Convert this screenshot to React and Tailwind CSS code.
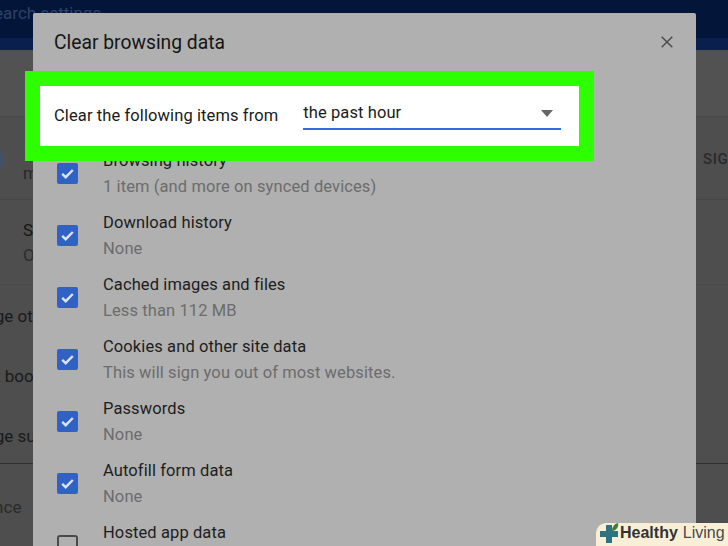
const rows = [
  ["Browsing history", "1 item (and more on synced devices)", true],
  ["Download history", "None", true],
  ["Cached images and files", "Less than 112 MB", true],
  ["Cookies and other site data", "This will sign you out of most websites.", true],
  ["Passwords", "None", true],
  ["Autofill form data", "None", true],
  ["Hosted app data", "", false],
];

function Box({ on }) {
  if (!on) return <div className="w-[21px] h-[21px] mt-[14px] rounded-[3px] border-2 border-[#4a4a4a] shrink-0" />;
  return (
    <div className="w-[21px] h-[21px] mt-[14px] rounded-[2px] bg-[#2f62c4] shrink-0 flex items-center justify-center">
      <svg width="15" height="15" viewBox="0 0 15 15" fill="none">
        <path d="M2.2 7.8l3.5 3.4L12.8 4" stroke="#dde3ee" strokeWidth="2.4" />
      </svg>
    </div>
  );
}

export default function App() {
  return (
    <div className="relative w-[728px] h-[546px] overflow-hidden bg-[#4e4e4e] font-['Roboto',sans-serif]">
      <div className="h-[38px] bg-[#04153a] text-[#2f4168] text-[17px] pt-[1px] -ml-[16px] pl-0 whitespace-nowrap">Search settings</div>
      <div className="h-[12px] bg-[#09204f]" />
      <div className="flex flex-col text-[#1c1c1c] text-[17px] leading-[20px] whitespace-nowrap">
        <div className="h-[67px] bg-[#525252] border-b border-[#484848]" />
        <div className="h-[83px] border-b border-[#484848] flex">
          <div className="w-[28px] h-[28px] -ml-[25px] mt-[29px] rounded-full bg-[#3d5270]" />
          <div className="ml-[20px] mt-[46px] text-[#282828]">m</div>
        </div>
        <div className="h-[85px] border-b border-[#4a4a4a] pt-[20px] pl-[23px]">
          <div className="text-[#161616]">S</div>
          <div className="mt-[5px] text-[#2c2c2c]">O</div>
        </div>
        <div className="h-[60px] pt-[21px] -ml-[48px] text-[#1a1a1a]">Manage other people</div>
        <div className="h-[60px] pt-[21px] -ml-[50px] text-[#1a1a1a]">Import bookmarks</div>
        <div className="h-[59px] pt-[21px] -ml-[48px] text-[#1a1a1a] border-b border-[#303030]">Manage supervised</div>
        <div className="h-[80px] pt-[33px] -ml-[69px] text-[#2a2a2a]">Appearance</div>
      </div>

      {/* Clear browsing data dialog */}
      <div className="absolute left-[33px] top-[13px] w-[663px] h-[560px] bg-[#b0b0b0] rounded-t-[2px] pl-[21px]">
        <div className="pt-[18px] text-[19.3px] leading-[24px] text-[#151515]">Clear browsing data</div>
        <svg className="absolute left-[628px] top-[23px]" width="12" height="12" viewBox="0 0 12 12" fill="none">
          <path d="M0.7 0.7l10.6 10.6M11.3 0.7L0.7 11.3" stroke="#4d4d4d" strokeWidth="1.5" />
        </svg>
        <div className="mt-[94px] flex flex-col">
          {rows.map(([title, sub, on]) => (
            <div key={title} className="h-[62px] flex items-start gap-[25px] pl-[3px]">
              <Box on={on} />
              <div className="flex flex-col">
                <div className="text-[16.5px] leading-[24px] text-[#1d1d1d] tracking-[0.1px]">{title}</div>
                <div className="text-[16.5px] leading-[24px] mt-[2px] text-[#6c6c6c] tracking-[0.1px]">{sub}</div>
              </div>
            </div>
          ))}
        </div>
      </div>

      {/* Green highlight */}
      <div className="absolute left-[25px] top-[71px] w-[569px] h-[90px] border-[15px] border-[#2eff00] bg-white flex items-center pl-[14px]">
        <span className="text-[16.5px] text-[#1a1a1a] tracking-[0.1px] whitespace-nowrap">Clear the following items from</span>
        <div className="ml-[25px] w-[258px] h-[31px] border-b-2 border-[#2f6fdd] flex items-center justify-between pr-[8px] -mt-[4px]">
          <span className="text-[16.5px] text-[#1a1a1a] tracking-[0.1px]">the past hour</span>
          <span className="w-0 h-0 border-x-[6.5px] border-x-transparent border-t-[7px] border-t-[#666666]" />
        </div>
      </div>

      {/* Right peek */}
      <div className="absolute left-[703px] top-[148px] text-[15px] text-[#2a2a2a] tracking-[0.6px] font-medium">SIGN</div>

      {/* Watermark */}
      <div className="absolute left-[596px] top-[523px] w-[140px] h-[23px] bg-[#f8efd6] rounded-tl-[10px] flex items-center pl-[3px] pb-[3px] font-['Liberation_Sans',sans-serif] text-[16px] leading-none">
        <svg width="21" height="23" viewBox="0 0 21 23" className="shrink-0 -mb-[3px]">
          <path d="M7 2h6v6h6v6h-6v6H7v-6H1V8h6z" fill="#2d7480" />
          <path d="M13 8c0-4 2-7 6-8 1 4-2 8-6 8z" fill="#3b7d3a" />
        </svg>
        <span className="font-bold text-[#333333] whitespace-nowrap">Healthy</span>
        <span className="ml-[5px] text-[#4a4a4a] whitespace-nowrap">Living</span>
      </div>
    </div>
  );
}
